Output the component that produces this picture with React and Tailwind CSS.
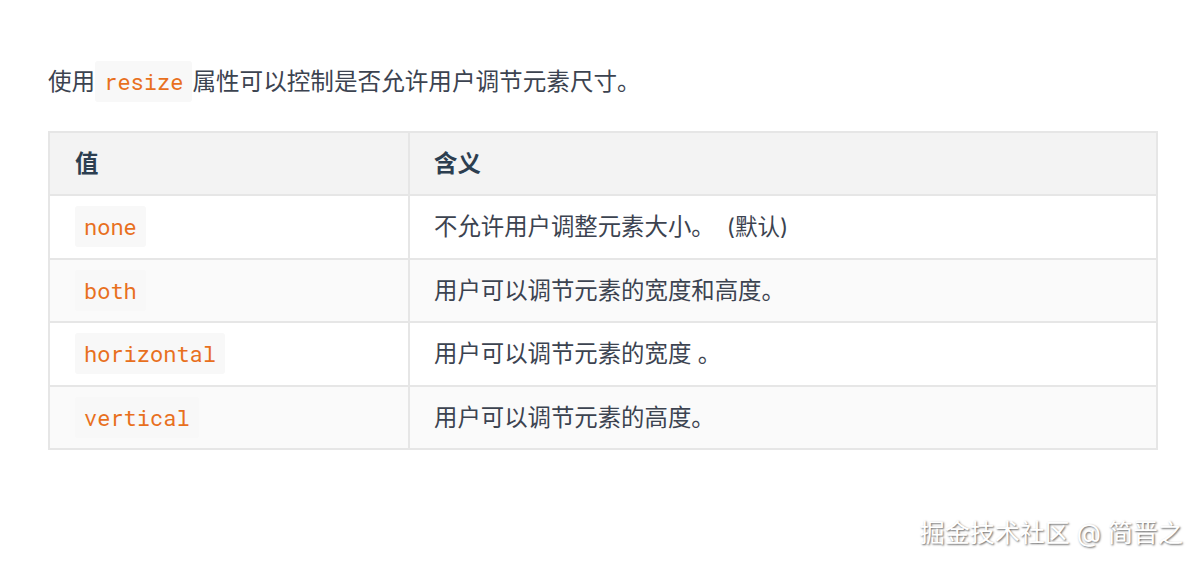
const rows = [
  { value: 'none', desc: '不允许用户调整元素大小。', extra: '(默认)' },
  { value: 'both', desc: '用户可以调节元素的宽度和高度。' },
  { value: 'horizontal', desc: '用户可以调节元素的宽度 。' },
  { value: 'vertical', desc: '用户可以调节元素的高度。' },
];

const cjk = "font-['Inter','Noto_Sans_CJK_SC',sans-serif]";

const Code = ({ children }) => (
  <code className="rounded-[3px] bg-[#f8f8f8] px-[9px] py-[6px] font-['Roboto_Mono','Liberation_Mono',monospace] text-[22px] text-[#e8701e]">
    {children}
  </code>
);

export default function App() {
  return (
    <div className={`relative h-[568px] w-[1200px] bg-white ${cjk} text-[#3c4350]`}>
      <div className="px-[48px] pt-[64px]">
        <p className="text-[23.6px] leading-[36px]">
          使用<Code>resize</Code>属性可以控制是否允许用户调节元素尺寸。
        </p>

        <table className="mt-[31px] w-[1110px] border-collapse text-[23.4px]">
          <thead>
            <tr className="h-[63px] bg-[#f3f3f3]">
              <th className="w-[360px] border-2 border-[#e6e6e6] px-[25px] text-left font-bold text-[#2c3e50]">值</th>
              <th className="border-2 border-[#e6e6e6] px-[24px] text-left font-bold text-[#2c3e50]">含义</th>
            </tr>
          </thead>
          <tbody>
            {rows.map((r, i) => (
              <tr key={r.value} className={`h-[63.5px] ${i % 2 === 1 ? 'bg-[#fafafa]' : 'bg-white'}`}>
                <td className="border-2 border-[#e6e6e6] px-[25px]">
                  <Code>{r.value}</Code>
                </td>
                <td className="border-2 border-[#e6e6e6] px-[24px]">
                  {r.desc}
                  {r.extra && <span className="ml-[12px] text-[22.5px]">{r.extra}</span>}
                </td>
              </tr>
            ))}
          </tbody>
        </table>
      </div>

      <div className="absolute bottom-[16px] right-[17px] text-[25px] text-white [text-shadow:1px_1px_2px_rgba(0,0,0,0.6)]">
        掘金技术社区 @ 简晋之
      </div>
    </div>
  );
}
